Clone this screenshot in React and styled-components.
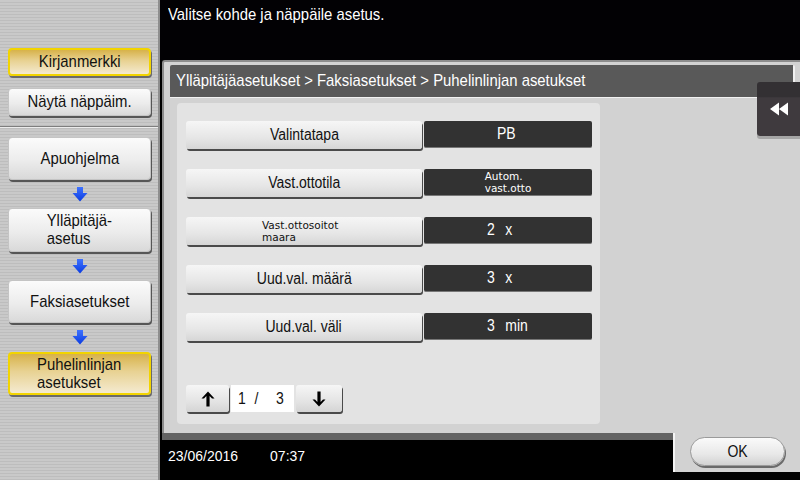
import React from 'react';
import styled, { createGlobalStyle, css } from 'styled-components';

const Global = createGlobalStyle`
  html, body {
    margin: 0;
    padding: 0;
    background: #000;
  }
  body {
    font-family: "Liberation Sans", Arial, sans-serif;
  }
`;

// the panel font is a narrow grotesque: squeeze Liberation Sans to match
const Narrow = styled.span`
  display: inline-block;
  white-space: nowrap;
  transform: scaleX(0.875);
  transform-origin: ${p => p.$origin || 'center'};
`;

const Screen = styled.div`
  width: 800px;
  height: 480px;
  display: grid;
  grid-template-columns: 160px 1fr;
  overflow: hidden;
  background: #000;
`;

const Sidebar = styled.div`
  display: flex;
  flex-direction: column;
  align-items: flex-start;
  padding-top: 48px;
  background: repeating-linear-gradient(
    to bottom,
    #c9c9c9 0px,
    #c9c9c9 2px,
    #bdbdbd 2px,
    #bdbdbd 3px
  );
  border-right: 2px solid #8e8e8e;
  box-sizing: border-box;
`;

const SideButton = styled.div`
  box-sizing: border-box;
  width: 143px;
  height: ${p => p.$h || 43}px;
  margin-left: 8px;
  display: flex;
  align-items: center;
  justify-content: center;
  border-radius: 4px;
  font-size: 17px;
  color: #111;
  line-height: 18px;
  background: linear-gradient(to bottom, #fbfbfb 0%, #ececec 55%, #d9d9d9 100%);
  border: 1px solid #c4c4c4;
  box-shadow: 1px 2px 0 #565656;
  ${p => p.$active && css`
    background: linear-gradient(to bottom, #d7b24a 0%, #e8d293 45%, #f4ead0 100%);
    border: 2px solid #f2d400;
    box-shadow: 1px 2px 0 #6a6a6a;
  `}
`;

const TextBlock = styled(Narrow)`
  text-align: left;
`;

const Spacer = styled.div`
  height: ${p => p.$h}px;
`;

const Separator = styled.div`
  align-self: stretch;
  height: 1px;
  background: #7e7e7e;
  border-bottom: 1px solid #ececec;
  margin: 10px 0 9px;
`;

const FlowArrow = styled.div`
  width: 143px;
  margin-left: 8px;
  height: ${p => p.$h || 28}px;
  display: flex;
  align-items: center;
  justify-content: center;
`;

const DownArrow = () => (
  <svg width="16" height="15" viewBox="0 0 16 15">
    <defs>
      <linearGradient id="ba" x1="0" y1="0" x2="0" y2="1">
        <stop offset="0" stopColor="#3f72ff" />
        <stop offset="1" stopColor="#0b3ce0" />
      </linearGradient>
    </defs>
    <path d="M5 0 H11 V6 H15.5 L8 14.5 L0.5 6 H5 Z" fill="url(#ba)" />
  </svg>
);

const Main = styled.div`
  display: grid;
  grid-template-rows: 60px 1fr 47px;
  min-width: 0;
`;

const TopBar = styled.div`
  background: #020104;
  color: #fff;
  font-size: 17px;
  padding: 5px 0 0 8px;
`;

const Panel = styled.div`
  position: relative;
  margin-left: 2px;
  background: #d2d2d2;
  border-top: 2px solid #8c8c8c;
  border-left: 2px solid #8c8c8c;
  border-top-left-radius: 3px;
  display: flex;
  flex-direction: column;
  padding: 3px 5px 9px 6px;
`;

const Header = styled.div`
  height: 32px;
  display: flex;
  align-items: center;
  padding-left: 6px;
  background: #595959;
  color: #fff;
  font-size: 17px;
  border-bottom: 1px solid #f2f2f2;
  border-right: 2px solid #f0f0f0;
  border-radius: 2px 2px 0 0;
`;

const Body = styled.div`
  flex: 1;
  display: flex;
  padding: 5px 0 0 7px;
`;

const ListPanel = styled.div`
  width: 423px;
  box-sizing: border-box;
  background: #e3e3e3;
  border-radius: 4px;
  padding: 18px 8px 12px 9px;
  display: flex;
  flex-direction: column;
  gap: 20px;
`;

const Row = styled.div`
  display: flex;
  gap: 2px;
  height: 28px;
`;

const LabelButton = styled.div`
  box-sizing: border-box;
  width: 236px;
  height: 28px;
  display: flex;
  align-items: center;
  justify-content: ${p => (p.$small ? 'flex-start' : 'center')};
  padding-left: ${p => (p.$small ? '76px' : '0')};
  border-radius: 3px;
  background: linear-gradient(to bottom, #f6f6f6 0%, #e6e6e6 60%, #d6d6d6 100%);
  box-shadow: 1px 2px 0 #4a4a4a;
  color: #111;
  font-size: 16px;
`;

const SmallText = styled.span`
  font-family: "DejaVu Sans", Verdana, sans-serif;
  font-size: 10.5px;
  line-height: 12.5px;
  color: ${p => (p.$light ? '#fff' : '#111')};
`;

const ValueBox = styled.div`
  box-sizing: border-box;
  width: 168px;
  height: 27px;
  display: flex;
  align-items: center;
  justify-content: ${p => (p.$unit ? 'flex-start' : 'center')};
  padding-left: ${p => (p.$unit ? '63px' : '0')};
  background: #323232;
  border-radius: 2px;
  border-bottom: 1px solid #777;
  color: #fff;
  font-size: 16px;
`;

const Unit = styled.span`
  margin-left: 12px;
`;

const Pager = styled.div`
  margin-top: auto;
  display: flex;
  align-items: stretch;
  height: 27px;
  gap: 2px;
`;

const PageButton = styled.div`
  box-sizing: border-box;
  width: ${p => p.$w}px;
  display: flex;
  align-items: center;
  justify-content: center;
  border-radius: 3px;
  background: linear-gradient(to bottom, #f6f6f6 0%, #e4e4e4 60%, #d4d4d4 100%);
  box-shadow: 1px 2px 0 #4a4a4a;
`;

const PageBox = styled.div`
  width: 63px;
  background: #fff;
  display: flex;
  align-items: center;
  padding-left: 7px;
  box-sizing: border-box;
  font-size: 16px;
  color: #111;
`;

const PageNum = styled.span`
  margin-left: ${p => p.$gap || 0}px;
`;

const ArrowIcon = ({ up }) => (
  <svg width="14" height="16" viewBox="0 0 14 16" style={{ transform: up ? 'none' : 'rotate(180deg)' }}>
    <path d="M7 0.5 L13.5 7.5 L11 7.5 L8.6 5 V15.5 H5.4 V5 L3 7.5 L0.5 7.5 Z" fill="#000" />
  </svg>
);

const BackTab = styled.div`
  position: absolute;
  right: 0;
  top: 20px;
  width: 43px;
  height: 54px;
  display: flex;
  align-items: center;
  justify-content: center;
  background: linear-gradient(to bottom, #333033 0%, #333033 28%, #3f3a3e 29%, #3f3a3e 100%);
  border-radius: 3px 0 0 3px;
  box-shadow: 0 3px 0 #a5a5a5;
`;

const RewindIcon = () => (
  <svg width="20" height="14" viewBox="0 0 20 14">
    <path d="M10 0.5 V13.5 L1 7 Z M19 0.5 V13.5 L10 7 Z" fill="#fff" />
  </svg>
);

const Footer = styled.div`
  display: flex;
  background: #000;
`;

const DateBar = styled.div`
  flex: 1;
  margin-left: 2px;
  border-top: 7px solid #636363;
  color: #fff;
  font-size: 14px;
  display: flex;
  gap: 32px;
  padding: 8px 0 0 6px;
`;

const OkTab = styled.div`
  width: 127px;
  height: 39px;
  box-sizing: border-box;
  background: #d2d2d2;
  border-left: 2px solid #f4f4f4;
  display: flex;
  justify-content: center;
  padding-top: 4px;
`;

const OkButton = styled.div`
  width: 95px;
  height: 29px;
  box-sizing: border-box;
  border-radius: 15px;
  display: flex;
  align-items: center;
  justify-content: center;
  background: linear-gradient(to bottom, #fafafa 0%, #e8e8e8 60%, #d2d2d2 100%);
  border: 1px solid #9a9a9a;
  box-shadow: 1px 2px 0 #6a6a6a;
  font-size: 16px;
  color: #111;
`;

const rows = [
  { label: 'Valintatapa', value: 'PB' },
  { label: 'Vast.ottotila', small: 'Autom.\nvast.otto' },
  { label: 'Vast.ottosoitot\nmaara', smallLabel: true, value: '2', unit: 'x' },
  { label: 'Uud.val. määrä', value: '3', unit: 'x' },
  { label: 'Uud.val. väli', value: '3', unit: 'min' },
];

const lines = text => text.split('\n').map((t, i) => (
  <React.Fragment key={i}>{i > 0 && <br />}{t}</React.Fragment>
));

export default function App() {
  return (
    <Screen>
      <Global />
      <Sidebar>
        <SideButton $active $h={28}><Narrow>Kirjanmerkki</Narrow></SideButton>
        <Spacer $h={12} />
        <SideButton $h={28}><Narrow>Näytä näppäim.</Narrow></SideButton>
        <Separator />
        <SideButton><Narrow>Apuohjelma</Narrow></SideButton>
        <FlowArrow><DownArrow /></FlowArrow>
        <SideButton $h={44}><TextBlock>Ylläpitäjä-<br />asetus</TextBlock></SideButton>
        <FlowArrow><DownArrow /></FlowArrow>
        <SideButton><Narrow>Faksiasetukset</Narrow></SideButton>
        <FlowArrow $h={29}><DownArrow /></FlowArrow>
        <SideButton $active><TextBlock>Puhelinlinjan<br />asetukset</TextBlock></SideButton>
      </Sidebar>
      <Main>
        <TopBar><Narrow $origin="left">Valitse kohde ja näppäile asetus.</Narrow></TopBar>
        <Panel>
          <Header>
            <Narrow $origin="left">Ylläpitäjäasetukset &gt; Faksiasetukset &gt; Puhelinlinjan asetukset</Narrow>
          </Header>
          <Body>
            <ListPanel>
              {rows.map(r => (
                <Row key={r.label}>
                  <LabelButton $small={r.smallLabel}>
                    {r.smallLabel ? <SmallText>{lines(r.label)}</SmallText> : <Narrow>{r.label}</Narrow>}
                  </LabelButton>
                  <ValueBox $unit={!!r.unit}>
                    {r.small && <SmallText $light>{lines(r.small)}</SmallText>}
                    {r.value && (
                      <Narrow $origin="left">
                        {r.value}
                        {r.unit && <Unit>{r.unit}</Unit>}
                      </Narrow>
                    )}
                  </ValueBox>
                </Row>
              ))}
              <Pager>
                <PageButton $w={43}><ArrowIcon up /></PageButton>
                <PageBox>
                  <Narrow $origin="left">
                    <PageNum>1</PageNum>
                    <PageNum $gap={10}>/</PageNum>
                    <PageNum $gap={20}>3</PageNum>
                  </Narrow>
                </PageBox>
                <PageButton $w={46}><ArrowIcon /></PageButton>
              </Pager>
            </ListPanel>
          </Body>
          <BackTab><RewindIcon /></BackTab>
        </Panel>
        <Footer>
          <DateBar><span>23/06/2016</span><span>07:37</span></DateBar>
          <OkTab><OkButton><Narrow>OK</Narrow></OkButton></OkTab>
        </Footer>
      </Main>
    </Screen>
  );
}
